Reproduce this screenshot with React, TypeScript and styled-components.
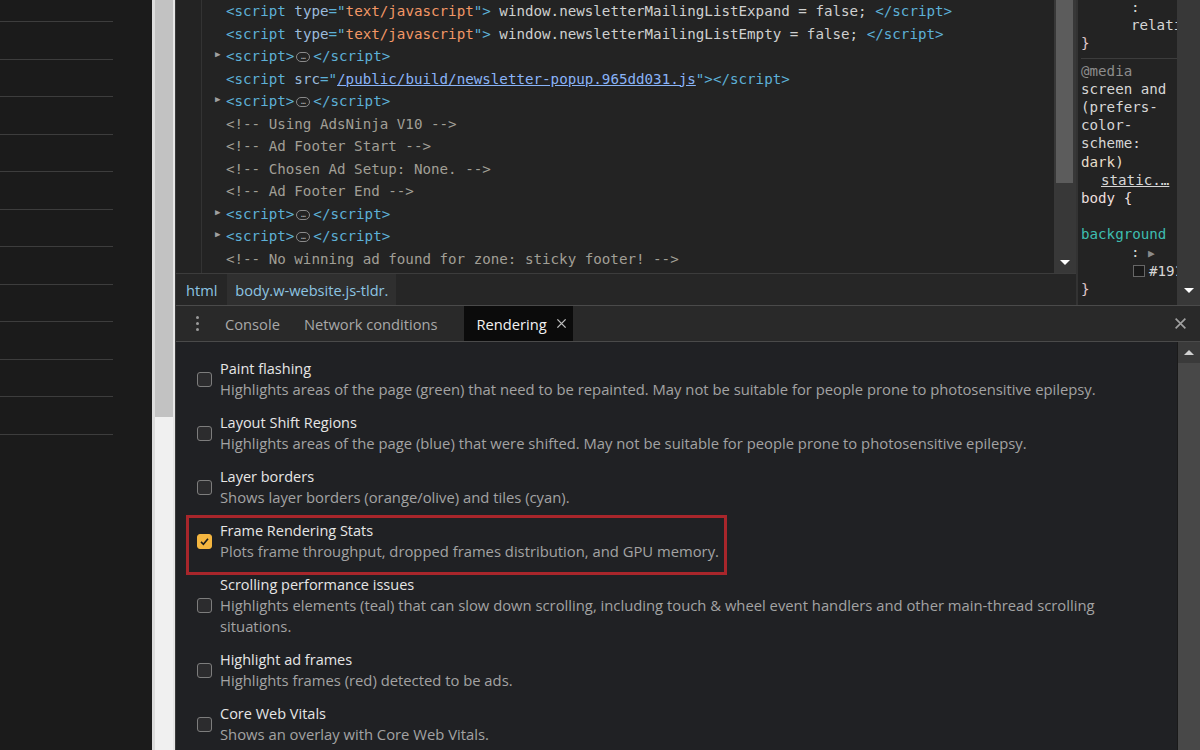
import React from "react";
import styled, { createGlobalStyle } from "styled-components";

const GlobalStyle = createGlobalStyle`
  html, body {
    margin: 0;
    padding: 0;
    background: #1b1b1b;
    overflow: hidden;
  }
  * {
    box-sizing: border-box;
  }
`;

const MONO = `"DejaVu Sans Mono", "Liberation Mono", monospace`;
const SANS = `"Open Sans", "Noto Sans", sans-serif`;

const Screen = styled.div`
  display: flex;
  width: 1200px;
  height: 750px;
  overflow: hidden;
`;

const PagePane = styled.div`
  width: 152px;
  flex-shrink: 0;
  background: #1b1b1b;
  padding-top: 21px;
`;

const PageRule = styled.div`
  width: 113px;
  height: 37.5px;
  border-top: 1px solid #3d3d3d;
`;

const PageScroll = styled.div`
  width: 23px;
  flex-shrink: 0;
  background: #f0f0f0;
  border-left: 3px solid #dcdcdc;
  border-right: 2px solid #e6e6e6;
  display: flex;
  flex-direction: column;
`;

const PageThumb = styled.div`
  height: 417px;
  background: #c2c2c2;
`;

const DevTools = styled.div`
  flex: 1;
  display: flex;
  flex-direction: column;
  background: #232323;
  border-left: 1px solid #3a3a3a;
  min-width: 0;
`;

const UpperArea = styled.div`
  display: flex;
  height: 305px;
  flex-shrink: 0;
`;

const ElementsColumn = styled.div`
  flex: 1;
  display: flex;
  flex-direction: column;
  min-width: 0;
`;

const ElementsBody = styled.div`
  display: flex;
  height: 274px;
  border-bottom: 1px solid #3c3c3c;
`;

const CodePane = styled.div`
  flex: 1;
  position: relative;
  padding-left: 50px;
  background: #232323;
  overflow: hidden;
  font-family: ${MONO};
  font-size: 14.2px;
  white-space: pre;
  color: #cfd0d0;

  &::before {
    content: "";
    position: absolute;
    left: 25px;
    top: 0;
    bottom: 0;
    border-left: 1px solid #333;
  }
`;

const CodeLine = styled.div`
  position: relative;
  height: 22.5px;
  line-height: 22.5px;
`;

const Arrow = styled.span`
  position: absolute;
  left: -11px;
  top: -2px;
  font-size: 9px;
  color: #a0a0a0;
`;

const Tag = styled.span`
  color: #5db0d7;
`;
const Attr = styled.span`
  color: #9bbbdc;
`;
const Val = styled.span`
  color: #f29766;
`;
const Link = styled.span`
  color: #8ab4f8;
  text-decoration: underline;
`;
const Comment = styled.span`
  color: #a19f96;
`;

const Ellipsis = styled.span`
  display: inline-flex;
  align-items: center;
  justify-content: center;
  width: 14px;
  height: 10px;
  margin: 0 3px 0 2px;
  border: 1px solid #8a8a8a;
  border-radius: 5px;
  font-size: 8px;
  line-height: 1;
  color: #b0b0b0;
  vertical-align: middle;
`;

const VScroll = styled.div<{ $width?: number }>`
  width: ${(p) => p.$width ?? 22}px;
  flex-shrink: 0;
  position: relative;
  background: #383838;
  display: flex;
  flex-direction: column;
`;

const VThumb = styled.div<{ $height: string }>`
  height: ${(p) => p.$height};
  margin: 0 3px 0 2px;
  background: #5c5c5c;
`;

const ScrollArrow = styled.span<{ $up?: boolean; $pos: number }>`
  position: absolute;
  left: 50%;
  ${(p) => (p.$up ? `top: ${p.$pos}px;` : `bottom: ${p.$pos}px;`)}
  transform: translateX(-50%);
  width: 0;
  height: 0;
  border-left: 5px solid transparent;
  border-right: 5px solid transparent;
  ${(p) =>
    p.$up ? "border-bottom: 5px solid #d0d0d0;" : "border-top: 5px solid #ffffff;"}
`;

const Breadcrumbs = styled.div`
  flex: 1;
  display: flex;
  align-items: stretch;
  background: #262626;
  font-family: ${SANS};
  font-size: 14.6px;
  color: #8cc4e2;
`;

const Crumb = styled.div<{ $active?: boolean }>`
  display: flex;
  align-items: center;
  padding: 0 ${(p) => (p.$active ? "8px" : "10px")};
  background: ${(p) => (p.$active ? "#2f2f2f" : "transparent")};
`;

const StylesColumn = styled.div`
  width: 124px;
  flex-shrink: 0;
  display: flex;
  border-left: 2px solid #333;
  background: #232323;
`;

const StylesBody = styled.div`
  flex: 1;
  overflow: hidden;
  font-family: ${MONO};
  font-size: 14.2px;
  white-space: pre;
  color: #d6d6d6;
  padding-left: 3px;
`;

const StyleBlock = styled.div<{ $top: number }>`
  margin-top: ${(p) => p.$top}px;
  line-height: 18.2px;
`;

const StyleRule = styled.div`
  border-top: 1px solid #3c3c3c;
  margin-top: 5px;
  padding-top: 3px;
`;

const StyleLine = styled.div<{ $indent?: number; $color?: string }>`
  height: 18.2px;
  padding-left: ${(p) => p.$indent ?? 0}px;
  color: ${(p) => p.$color ?? "#d6d6d6"};
`;

const Underlined = styled.span`
  text-decoration: underline;
`;

const Swatch = styled.span`
  display: inline-block;
  width: 12px;
  height: 12px;
  border: 1px solid #666;
  background: #191919;
  margin-right: 4px;
  vertical-align: -1px;
`;

const Drawer = styled.div`
  flex: 1;
  display: flex;
  flex-direction: column;
  min-height: 0;
`;

const TabBar = styled.div`
  height: 37px;
  flex-shrink: 0;
  display: flex;
  align-items: stretch;
  background: #292929;
  border-top: 1px solid #4a4a4a;
  border-bottom: 1px solid #4a4a4a;
  font-family: ${SANS};
  font-size: 14.7px;
  color: #a8a8a8;
`;

const Kebab = styled.div`
  width: 37px;
  display: flex;
  flex-direction: column;
  align-items: center;
  justify-content: center;
  gap: 3px;
  padding-left: 6px;

  & > i {
    width: 3px;
    height: 3px;
    border-radius: 50%;
    background: #9a9a9a;
  }
`;

const Tab = styled.div<{ $active?: boolean }>`
  display: flex;
  align-items: center;
  gap: 9px;
  padding: ${(p) => (p.$active ? "0 6px 0 13px" : "0 12px")};
  margin-left: ${(p) => (p.$active ? "14px" : "0")};
  background: ${(p) => (p.$active ? "#0b0b0b" : "transparent")};
  color: ${(p) => (p.$active ? "#f2f2f2" : "#a8a8a8")};
`;

const Spacer = styled.div`
  flex: 1;
`;

const CloseButton = styled.div`
  width: 40px;
  display: flex;
  align-items: center;
  justify-content: center;
`;

const DrawerBody = styled.div`
  flex: 1;
  display: flex;
  min-height: 0;
  background: #202124;
`;

const OptionList = styled.div`
  flex: 1;
  padding: 16px 0 0 21px;
  display: flex;
  flex-direction: column;
  gap: 12px;
  font-family: ${SANS};
  overflow: hidden;
`;

const Option = styled.div<{ $highlight?: boolean }>`
  position: relative;
  display: flex;
  align-items: center;
  gap: 8px;
  width: ${(p) => (p.$highlight ? "fit-content" : "auto")};

  ${(p) =>
    p.$highlight &&
    `
    &::after {
      content: "";
      position: absolute;
      top: -5px;
      left: -11px;
      right: -8px;
      bottom: -13px;
      border: 3px solid #a8262b;
    }
  `}
`;

const Checkbox = styled.span<{ $checked?: boolean }>`
  width: 15px;
  height: 15px;
  flex-shrink: 0;
  border-radius: 3px;
  border: 1px solid ${(p) => (p.$checked ? "#f4b640" : "#7d7d7d")};
  background: ${(p) => (p.$checked ? "#f4b640" : "#2c2c2e")};
  display: flex;
  align-items: center;
  justify-content: center;
`;

const OptionText = styled.div`
  display: flex;
  flex-direction: column;
  line-height: 21px;
  max-width: 900px;
`;

const OptionTitle = styled.div`
  color: #e6e6e6;
  font-size: 14.5px;
`;

const OptionDesc = styled.div`
  color: #a3a3a3;
  font-size: 14.8px;
`;

const DrawerScroll = styled.div`
  width: 23px;
  flex-shrink: 0;
  position: relative;
  background: #3a3a3a;
  border-left: 1px solid #1a1a1a;
  padding-top: 21px;
  display: flex;
`;

const DrawerThumb = styled.div`
  flex: 1;
  background: #484848;
`;

function Check() {
  return (
    <svg width="11" height="11" viewBox="0 0 12 12">
      <path d="M2.2 6.4 L4.8 9 L9.8 3" fill="none" stroke="#1d1d1d" strokeWidth="1.8" />
    </svg>
  );
}

function CloseIcon({ size, color }: { size: number; color: string }) {
  return (
    <svg width={size} height={size} viewBox="0 0 12 12">
      <path d="M1.5 1.5 L10.5 10.5 M10.5 1.5 L1.5 10.5" stroke={color} strokeWidth="1.5" />
    </svg>
  );
}

const Collapsed = () => (
  <>
    <Arrow>▶</Arrow>
    <Tag>&lt;script&gt;</Tag>
    <Ellipsis>…</Ellipsis>
    <Tag>&lt;/script&gt;</Tag>
  </>
);

const options = [
  {
    title: "Paint flashing",
    desc: "Highlights areas of the page (green) that need to be repainted. May not be suitable for people prone to photosensitive epilepsy.",
  },
  {
    title: "Layout Shift Regions",
    desc: "Highlights areas of the page (blue) that were shifted. May not be suitable for people prone to photosensitive epilepsy.",
  },
  {
    title: "Layer borders",
    desc: "Shows layer borders (orange/olive) and tiles (cyan).",
  },
  {
    title: "Frame Rendering Stats",
    desc: "Plots frame throughput, dropped frames distribution, and GPU memory.",
    checked: true,
  },
  {
    title: "Scrolling performance issues",
    desc: "Highlights elements (teal) that can slow down scrolling, including touch & wheel event handlers and other main-thread scrolling situations.",
  },
  {
    title: "Highlight ad frames",
    desc: "Highlights frames (red) detected to be ads.",
  },
  {
    title: "Core Web Vitals",
    desc: "Shows an overlay with Core Web Vitals.",
  },
];

export default function App() {
  return (
    <>
      <GlobalStyle />
      <Screen>
        <PagePane>
          {Array.from({ length: 12 }).map((_, i) => (
            <PageRule key={i} />
          ))}
        </PagePane>
        <PageScroll>
          <PageThumb />
        </PageScroll>
        <DevTools>
          <UpperArea>
            <ElementsColumn>
              <ElementsBody>
                <CodePane>
                  <CodeLine>
                    <Tag>&lt;script </Tag>
                    <Attr>type</Attr>
                    <Tag>="</Tag>
                    <Val>text/javascript</Val>
                    <Tag>"&gt;</Tag> window.newsletterMailingListExpand = false;{" "}
                    <Tag>&lt;/script&gt;</Tag>
                  </CodeLine>
                  <CodeLine>
                    <Tag>&lt;script </Tag>
                    <Attr>type</Attr>
                    <Tag>="</Tag>
                    <Val>text/javascript</Val>
                    <Tag>"&gt;</Tag> window.newsletterMailingListEmpty = false;{" "}
                    <Tag>&lt;/script&gt;</Tag>
                  </CodeLine>
                  <CodeLine>
                    <Collapsed />
                  </CodeLine>
                  <CodeLine>
                    <Tag>&lt;script </Tag>
                    <Attr>src</Attr>
                    <Tag>="</Tag>
                    <Link>/public/build/newsletter-popup.965dd031.js</Link>
                    <Tag>"&gt;&lt;/script&gt;</Tag>
                  </CodeLine>
                  <CodeLine>
                    <Collapsed />
                  </CodeLine>
                  <CodeLine>
                    <Comment>&lt;!-- Using AdsNinja V10 --&gt;</Comment>
                  </CodeLine>
                  <CodeLine>
                    <Comment>&lt;!-- Ad Footer Start --&gt;</Comment>
                  </CodeLine>
                  <CodeLine>
                    <Comment>&lt;!-- Chosen Ad Setup: None. --&gt;</Comment>
                  </CodeLine>
                  <CodeLine>
                    <Comment>&lt;!-- Ad Footer End --&gt;</Comment>
                  </CodeLine>
                  <CodeLine>
                    <Collapsed />
                  </CodeLine>
                  <CodeLine>
                    <Collapsed />
                  </CodeLine>
                  <CodeLine>
                    <Comment>&lt;!-- No winning ad found for zone: sticky footer! --&gt;</Comment>
                  </CodeLine>
                </CodePane>
                <VScroll>
                  <VThumb $height="183px" />
                  <ScrollArrow $pos={8} />
                </VScroll>
              </ElementsBody>
              <Breadcrumbs>
                <Crumb>html</Crumb>
                <Crumb $active>body.w-website.js-tldr.</Crumb>
              </Breadcrumbs>
            </ElementsColumn>
            <StylesColumn>
              <StylesBody>
                <StyleBlock $top={-2}>
                  <StyleLine $indent={50}>:</StyleLine>
                  <StyleLine $indent={50}>relati</StyleLine>
                  <StyleLine $color="#e0c8cc">{"}"}</StyleLine>
                  <StyleRule>
                    <StyleLine $color="#8c8c8c">@media</StyleLine>
                    <StyleLine>screen and</StyleLine>
                    <StyleLine>(prefers-</StyleLine>
                    <StyleLine>color-</StyleLine>
                    <StyleLine>scheme:</StyleLine>
                    <StyleLine $color="#e6dcc8">dark)</StyleLine>
                    <StyleLine $indent={20}>
                      <Underlined>static.…</Underlined>
                    </StyleLine>
                    <StyleLine $color="#ecdede">body {"{"}</StyleLine>
                    <StyleLine />
                    <StyleLine $color="#3ebdb0">background</StyleLine>
                    <StyleLine $indent={50}>
                      : <span style={{ color: "#8a8a8a", fontSize: 11 }}>▶</span>
                    </StyleLine>
                    <StyleLine $indent={52}>
                      <Swatch />
                      #191919
                    </StyleLine>
                    <StyleLine $color="#e0c8cc">{"}"}</StyleLine>
                  </StyleRule>
                </StyleBlock>
              </StylesBody>
              <VScroll $width={23}>
                <ScrollArrow $pos={12} />
              </VScroll>
            </StylesColumn>
          </UpperArea>
          <Drawer>
            <TabBar>
              <Kebab>
                <i />
                <i />
                <i />
              </Kebab>
              <Tab>Console</Tab>
              <Tab>Network conditions</Tab>
              <Tab $active>
                Rendering
                <CloseIcon size={11} color="#bdbdbd" />
              </Tab>
              <Spacer />
              <CloseButton>
                <CloseIcon size={13} color="#a0a0a0" />
              </CloseButton>
            </TabBar>
            <DrawerBody>
              <OptionList>
                {options.map((o) => (
                  <Option key={o.title} $highlight={o.checked}>
                    <Checkbox $checked={o.checked}>{o.checked && <Check />}</Checkbox>
                    <OptionText>
                      <OptionTitle>{o.title}</OptionTitle>
                      <OptionDesc>{o.desc}</OptionDesc>
                    </OptionText>
                  </Option>
                ))}
              </OptionList>
              <DrawerScroll>
                <ScrollArrow $up $pos={8} />
                <DrawerThumb />
              </DrawerScroll>
            </DrawerBody>
          </Drawer>
        </DevTools>
      </Screen>
    </>
  );
}
